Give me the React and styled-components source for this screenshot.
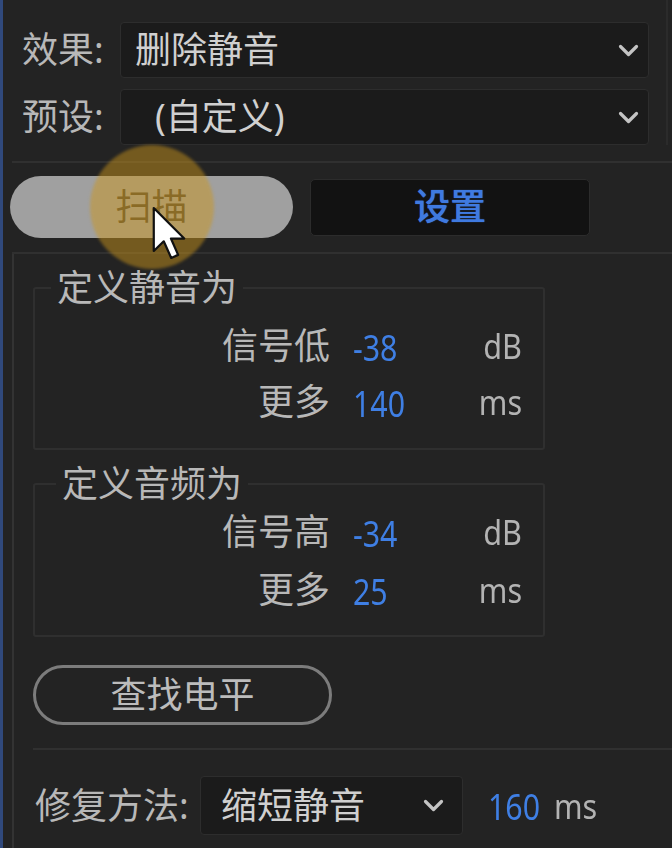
import React from "react";
import styled, { createGlobalStyle } from "styled-components";

const Global = createGlobalStyle`
  html, body { margin: 0; padding: 0; background: #232323; }
  * { box-sizing: border-box; }
`;

const Page = styled.div`
  position: relative;
  width: 672px;
  height: 848px;
  overflow: hidden;
  background: #232323;
  border-left: 3px solid #30497c;
  display: flex;
  flex-direction: column;
  font-family: "Noto Sans", "Noto Sans CJK SC", sans-serif;
  color: #bdbdbd;
`;

const TopSection = styled.div`
  padding: 22px 17px 0 19px;
  display: flex;
  flex-direction: column;
  gap: 11px;
  border-right: 2px solid #2b2b2b;
  margin-right: 4px;
`;

const FormRow = styled.div`
  display: flex;
  align-items: center;
  height: 56px;
`;

const Label = styled.div`
  width: ${(p) => p.$w}px;
  padding-left: ${(p) => p.$pad || 0}px;
  font-size: 36px;
  line-height: 1;
  color: #b8b8b8;
  white-space: nowrap;
  flex: none;
`;

const Select = styled.div`
  flex: ${(p) => (p.$w ? "none" : "1")};
  width: ${(p) => (p.$w ? `${p.$w}px` : "auto")};
  height: ${(p) => p.$h || 56}px;
  background: #1b1b1b;
  border: 1px solid #2d2d2d;
  border-radius: 4px;
  display: flex;
  align-items: center;
  justify-content: space-between;
  padding: 0 ${(p) => p.$right}px 0 ${(p) => p.$indent}px;
  font-size: 36px;
  line-height: 1;
  color: #d0d0d0;
  white-space: nowrap;
`;

const Divider = styled.div`
  height: 2px;
  background: #303030;
  margin-left: ${(p) => p.$left || 0}px;
  margin-top: ${(p) => p.$top || 0}px;
  flex: none;
`;

const ButtonRow = styled.div`
  position: relative;
  display: flex;
  align-items: center;
  gap: 17px;
  padding-left: 7px;
  margin-top: 13px;
  height: 62px;
`;

const ScanPill = styled.div`
  width: 283px;
  height: 62px;
  border-radius: 31px;
  background: #a0a0a0;
  display: flex;
  align-items: center;
  justify-content: center;
  font-size: 36px;
  line-height: 1;
  color: #4d4431;
  position: relative;
  z-index: 1;
`;

const SettingsButton = styled.div`
  width: 280px;
  height: 57px;
  border-radius: 5px;
  background: #121212;
  border: 1px solid #2c2c2c;
  display: flex;
  align-items: center;
  justify-content: center;
  font-size: 36px;
  line-height: 1;
  font-weight: 500;
  color: #3f7ae0;
  text-shadow: 0 0 1px #3f7ae0;
`;

const Highlight = styled.div`
  position: absolute;
  left: 87px;
  top: -31px;
  width: 124px;
  height: 124px;
  border-radius: 50%;
  background: rgba(205, 150, 28, 0.48);
  filter: blur(1.5px);
  z-index: 2;
  pointer-events: none;
`;

const Cursor = styled.svg`
  position: absolute;
  left: 148px;
  top: 28px;
  z-index: 3;
`;

const LowerSection = styled.div`
  flex: 1;
  margin-left: 9px;
  border-left: 2px solid #333333;
  padding: 15px 0 0 19px;
  display: flex;
  flex-direction: column;
`;

const Group = styled.fieldset`
  width: 512px;
  margin: ${(p) => p.$mt || 0}px 0 0 0;
  padding: 0 0 ${(p) => p.$pb}px 0;
  border: 2px solid #2f2f2f;
  border-radius: 3px;
  min-inline-size: 0;
`;

const Legend = styled.legend`
  margin-left: ${(p) => p.$offset}px;
  padding: 0 6px;
  font-size: 36px;
  line-height: 38px;
  color: #b8b8b8;
`;

const ParamGrid = styled.div`
  display: grid;
  grid-template-columns: 295px 99px 47px;
  grid-auto-rows: ${(p) => p.$rowH}px;
  column-gap: 23px;
  align-items: center;
  margin-top: ${(p) => p.$top}px;
`;

const ParamLabel = styled.div`
  justify-self: end;
  font-size: 36px;
  line-height: 1;
  color: #b8b8b8;
  white-space: nowrap;
`;

const Value = styled.div`
  display: inline-block;
  font-size: 37px;
  line-height: 1;
  color: #3f7fe4;
  transform: scaleX(0.82);
  transform-origin: left center;
  justify-self: start;
  margin-left: ${(p) => p.$ml || 0}px;
  margin-right: ${(p) => p.$mr || 0}px;
`;

const Unit = styled.div`
  justify-self: end;
  font-size: 34px;
  line-height: 1;
  color: #b3b3b3;
  transform: scaleX(0.9);
  transform-origin: right center;
  margin-left: ${(p) => p.$ml || 0}px;
`;

const OutlineButton = styled.div`
  margin-top: 28px;
  width: 299px;
  height: 60px;
  border: 3px solid #7c7c7c;
  border-radius: 30px;
  display: flex;
  align-items: center;
  justify-content: center;
  font-size: 36px;
  line-height: 1;
  color: #bcbcbc;
`;

const BottomRow = styled.div`
  display: flex;
  align-items: center;
  margin-top: 26px;
  height: 59px;
`;

const BottomUnit = styled.div`
  font-size: 34px;
  line-height: 1;
  color: #b3b3b3;
  margin-left: 2px;
  transform: scaleX(0.9);
  transform-origin: left center;
`;

const Chevron = () => (
  <svg width="21" height="13" viewBox="0 0 21 13" fill="none">
    <path d="M2.5 2.5 L10.5 10.5 L18.5 2.5" stroke="#c4c4c4" strokeWidth="3.2" strokeLinecap="round" strokeLinejoin="round" />
  </svg>
);

export default function App() {
  return (
    <>
      <Global />
      <Page>
        <TopSection>
          <FormRow>
            <Label $w={98}>效果:</Label>
            <Select $indent={14} $right={9}>
              <span>删除静音</span>
              <Chevron />
            </Select>
          </FormRow>
          <FormRow>
            <Label $w={98}>预设:</Label>
            <Select $indent={34} $right={9}>
              <span>(自定义)</span>
              <Chevron />
            </Select>
          </FormRow>
        </TopSection>
        <Divider $left={9} $top={16} />
        <ButtonRow>
          <ScanPill>扫描</ScanPill>
          <SettingsButton>设置</SettingsButton>
          <Highlight />
          <Cursor width="36" height="58" viewBox="0 0 13 20">
            <path
              d="M1 1 L1 16.5 L4.6 13 L7.3 19 L9.8 17.9 L7.2 12 L12 12 Z"
              fill="#ffffff"
              stroke="#111"
              strokeWidth="0.8"
              strokeLinejoin="round"
            />
          </Cursor>
        </ButtonRow>
        <Divider $left={9} $top={14} />
        <LowerSection>
          <Group $pb={18}>
            <Legend $offset={16}>定义静音为</Legend>
            <ParamGrid $rowH={56} $top={11}>
              <ParamLabel>信号低</ParamLabel>
              <Value>-38</Value>
              <Unit>dB</Unit>
              <ParamLabel>更多</ParamLabel>
              <Value>140</Value>
              <Unit>ms</Unit>
            </ParamGrid>
          </Group>
          <Group $mt={15} $pb={16}>
            <Legend $offset={21}>定义音频为</Legend>
            <ParamGrid $rowH={58} $top={0}>
              <ParamLabel>信号高</ParamLabel>
              <Value>-34</Value>
              <Unit>dB</Unit>
              <ParamLabel>更多</ParamLabel>
              <Value>25</Value>
              <Unit>ms</Unit>
            </ParamGrid>
          </Group>
          <OutlineButton>查找电平</OutlineButton>
          <Divider $top={23} />
          <BottomRow>
            <Label $w={167} $pad={2}>修复方法:</Label>
            <Select $w={263} $h={59} $indent={20} $right={18}>
              <span>缩短静音</span>
              <Chevron />
            </Select>
            <Value $ml={25}>160</Value>
            <BottomUnit>ms</BottomUnit>
          </BottomRow>
        </LowerSection>
      </Page>
    </>
  );
}
